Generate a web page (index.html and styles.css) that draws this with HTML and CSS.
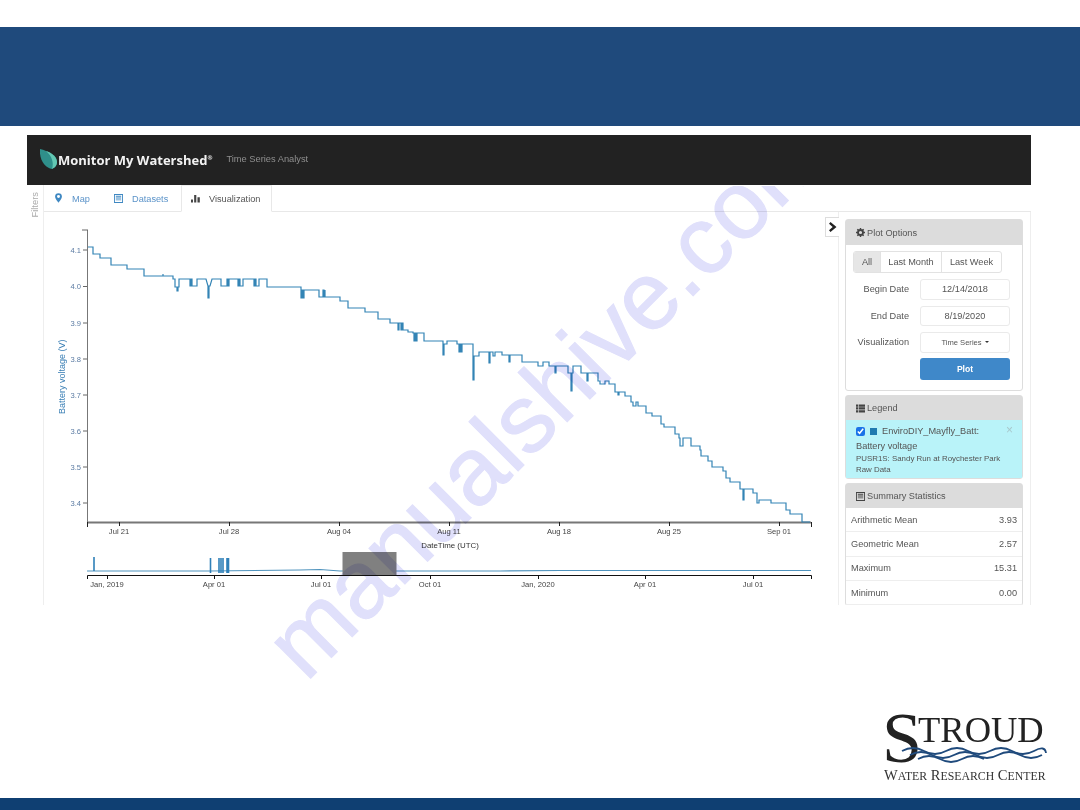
FILE: index.html
```html
<!DOCTYPE html>
<html lang="en">
<head>
    <meta charset="UTF-8">
    <title>Time Series Analyst</title>
    <link rel="stylesheet" href="styles.css">
</head>
<body>
    <div class="slide">
        <div class="title-band"></div>

        <div class="app">
            <header class="app-bar">
                <svg class="brand-leaf" viewBox="40 148 17 20" width="17" height="20">
                    <path fill="#2f8f8a" d="M40 148C48 150 57 154 57 161C57 165 54 167 52 168C46 167 39 160 40 148Z"/>
                    <path fill="#63c7b2" d="M46 150C52 152 57 156 57 161C57 165 54 167 52 168C54 162 52 155 46 150Z"/>
                </svg>
                <span class="brand-name">Monitor My Watershed<sup>®</sup></span>
                <span class="brand-sub">Time Series Analyst</span>
            </header>

            <div class="app-body">
                <div class="filters-rail"><span>Filters</span></div>

                <div class="workspace">
                    <nav class="tabs">
                        <a class="tab tab-map">
                            <svg class="icon icon-marker" viewBox="0 0 8 11"><path fill-rule="evenodd" d="M4 0a3.9 3.9 0 0 0-3.9 3.900C.1 6.600 4 11 4 11s3.900-4.400 3.900-7.100A3.900 3.900 0 0 0 4 0zm0 5.600a1.700 1.700 0 1 1 0-3.400 1.700 1.700 0 0 1 0 3.400z"/></svg>
                            Map
                        </a>
                        <a class="tab tab-datasets">
                            <svg class="icon" viewBox="0 0 10 10"><path fill-rule="evenodd" d="M0 0h10v10H0zm1 1v8h8V1zm1 1h6v1H2zm0 2h6v1H2zm0 2h6v1H2z"/></svg>
                            Datasets
                        </a>
                        <a class="tab tab-active">
                            <svg class="icon" viewBox="0 0 10 10"><path d="M0 6h2.200v3.500H0zM3.500 1h2.400v8.500H3.500zM7.200 3.500h2.600v6H7.200z"/></svg>
                            Visualization
                        </a>
                    </nav>

                    <div class="content">
                        <svg class="chart" viewBox="44 212 794 393" width="794" height="393">
                            <!-- main plot axes -->
                            <path class="axis-y" d="M87.5 230V522"/>
                            <path class="tick-y" d="M82 230h6M83 250h4M83 286.5h4M83 323h4M83 359h4M83 395h4M83 431h4M83 467h4M83 503h4"/>
                            <path class="axis-x" d="M87 522.5H811"/>
                            <path class="tick-x" d="M87.5 522v5M119.5 522v4M229.5 522v4M339.5 522v4M449.5 522v4M559.5 522v4M669.5 522v4M779.5 522v4M811.5 522v5"/>

                            <g class="labels-y">
                                <text x="81" y="253">4.1</text>
                                <text x="81" y="289">4.0</text>
                                <text x="81" y="326">3.9</text>
                                <text x="81" y="362">3.8</text>
                                <text x="81" y="398">3.7</text>
                                <text x="81" y="434">3.6</text>
                                <text x="81" y="470">3.5</text>
                                <text x="81" y="506">3.4</text>
                            </g>
                            <text class="label-y-title" transform="translate(65 414) rotate(-90)">Battery voltage (V)</text>

                            <g class="labels-x">
                                <text x="119" y="534">Jul 21</text>
                                <text x="229" y="534">Jul 28</text>
                                <text x="339" y="534">Aug 04</text>
                                <text x="449" y="534">Aug 11</text>
                                <text x="559" y="534">Aug 18</text>
                                <text x="669" y="534">Aug 25</text>
                                <text x="779" y="534">Sep 01</text>
                            </g>
                            <text class="label-x-title" x="450" y="548">DateTime (UTC)</text>

                            <!-- battery series, stepped -->
                            <path class="series" d="M88 247H93V254H100V258H111V265H127V269H144V276H163V274V276H173V279H175V287H177V291H178V287H179V279H190V286H191V279H192V286H197V279H206L208 286V298H209V286H210L212 279H221V286H227V279H228V286H229V279H238V286H239V279H240V286H243V279H254V286H255V279H256V286H259V279H267V287H301V298H302V290H303V298H304V290H319V297H323V290H324V297H325V290V297H340V301H348V308H365V312H378V319H390V323H398V330H399V323H401V330H402V323H403V330H408V332H413V333H414V341H415V333H416V341H417V333H424V341H443V355H444V344H447V341H457V344H459V352H460V344H461V352H462V344H473V380H474V356H479V352H489V363H490V352H493V356H495V352H502V355H509V362H510V355H522V362H538V366H543V362H549V366H555V373H556V366H568V373H571V391H572V373H573V366H581V373H587V381H588V373H598V381H600V384H605V381H609V384H615V392H618V395H619V392H625V396H631V402H633V406H636V402H638V406H646V413H652V416H661V424H664V427H675V434H679V438H680V446H683V438H691V446H700V450H701V456H708V461H712V467H723V471H726V478H730V482H740V489H743V500H744V489H753V493H757V503H759V500H771V503H786V510H790V514H802V522H810"/>

                            <!-- overview strip -->
                            <path class="overview-line" d="M87 571H210L300 570L320 569.5L340 571H500L560 570.5H811"/>
                            <path class="overview-spikes" d="M94 557V571M210.5 558V573M219 558V573M221 558V573M223 558V573M227 558V573M228.5 558V573"/>
                            <rect class="brush" x="342.5" y="552" width="54" height="23"/>
                            <path class="overview-axis" d="M87.5 579V575.5H811.5V579M107.5 575v4M214.5 575v4M321.5 575v4M430.5 575v4M538.5 575v4M645.5 575v4M753.5 575v4"/>
                            <g class="labels-x">
                                <text x="107" y="587">Jan, 2019</text>
                                <text x="214" y="587">Apr 01</text>
                                <text x="321" y="587">Jul 01</text>
                                <text x="430" y="587">Oct 01</text>
                                <text x="538" y="587">Jan, 2020</text>
                                <text x="645" y="587">Apr 01</text>
                                <text x="753" y="587">Jul 01</text>
                            </g>
                        </svg>

                        <button class="panel-toggle">
                            <svg viewBox="0 0 8 10" width="8" height="10"><path d="M1.5 0L7.5 5 1.5 10 0 8.300 3.700 5 0 1.700z"/></svg>
                        </button>

                        <aside class="side">
                            <section class="panel">
                                <h3 class="panel-heading">
                                    <svg class="icon" viewBox="0 0 10 10">
                                        <circle cx="5" cy="5" r="2.800" fill="none" stroke="#444" stroke-width="2"/>
                                        <path fill="none" stroke="#444" stroke-width="1.600" d="M5 0v2M5 8v2M0 5h2M8 5h2M1.500 1.500l1.400 1.400M7.100 7.100l1.400 1.400M1.500 8.500l1.400-1.400M7.100 2.900l1.400-1.400"/>
                                    </svg>
                                    Plot Options
                                </h3>
                                <div class="plot-form">
                                    <div class="btn-group">
                                        <span class="btn-seg btn-all">All</span>
                                        <span class="btn-seg btn-month">Last Month</span>
                                        <span class="btn-seg btn-week">Last Week</span>
                                    </div>
                                    <div class="form-row">
                                        <label>Begin Date</label>
                                        <div class="field">12/14/2018</div>
                                    </div>
                                    <div class="form-row">
                                        <label>End Date</label>
                                        <div class="field">8/19/2020</div>
                                    </div>
                                    <div class="form-row">
                                        <label>Visualization</label>
                                        <div class="field field-select">Time Series <i class="caret"></i></div>
                                    </div>
                                    <div class="form-row">
                                        <span></span>
                                        <div class="btn-plot">Plot</div>
                                    </div>
                                </div>
                            </section>

                            <section class="panel">
                                <h3 class="panel-heading heading-legend">
                                    <svg class="icon" viewBox="0 0 10 9"><path d="M0 0h2.500v2.500H0zM3.200 0H10v2.500H3.200zM0 3.200h2.500v2.500H0zM3.200 3.200H10v2.500H3.200zM0 6.400h2.500v2.500H0zM3.200 6.400H10v2.500H3.200z"/></svg>
                                    Legend
                                </h3>
                                <div class="legend-item">
                                    <div class="legend-title">
                                        <input type="checkbox" checked>
                                        <i class="swatch"></i>
                                        <span>EnviroDIY_Mayfly_Batt:</span>
                                        <span class="legend-close">×</span>
                                    </div>
                                    <div class="legend-line">Battery voltage</div>
                                    <div class="legend-small">PUSR1S: Sandy Run at Roychester Park</div>
                                    <div class="legend-small">Raw Data</div>
                                </div>
                            </section>

                            <section class="panel">
                                <h3 class="panel-heading heading-legend">
                                    <svg class="icon" viewBox="0 0 10 10"><path fill-rule="evenodd" d="M0 0h10v10H0zm1 1v8h8V1zm1 1h6v1H2zm0 2h6v1H2zm0 2h6v1H2z"/></svg>
                                    Summary Statistics
                                </h3>
                                <div class="stat-row"><span>Arithmetic Mean</span><span>3.93</span></div>
                                <div class="stat-row"><span>Geometric Mean</span><span>2.57</span></div>
                                <div class="stat-row"><span>Maximum</span><span>15.31</span></div>
                                <div class="stat-row"><span>Minimum</span><span>0.00</span></div>
                            </section>
                        </aside>
                    </div>
                </div>
            </div>
        </div>

        <div class="logo-row">
            <svg class="stroud-logo" viewBox="880 705 172 80" width="172" height="80">
                <text class="logo-s" x="882" y="762">S</text>
                <text class="logo-troud" x="918" y="742">TROUD</text>
                <g class="logo-waves">
                    <path d="M902 751q11-6 22 0t22 0 22 0 22 0 22 0 22 0 12 2"/>
                    <path d="M910 755q11-6 22 0t22 0 22 0 22 0 22 0 22 0"/>
                    <path d="M918 759q11-6 22 0t22 0 22 0"/>
                </g>
                <text class="logo-sub" x="884" y="780">W<tspan>ATER</tspan> R<tspan>ESEARCH</tspan> C<tspan>ENTER</tspan></text>
            </svg>
        </div>

        <div class="bottom-bar"></div>
    </div>

    <svg class="watermark" viewBox="0 0 1080 810" width="1080" height="810">
        <text transform="translate(306 683) rotate(-45)">manualshive.com</text>
    </svg>
</body>
</html>
```

FILE: styles.css
```css
* {
    margin: 0;
    padding: 0;
    box-sizing: border-box;
}

body {
    font-family: "Liberation Sans", Arial, sans-serif;
    font-size: 9.2px;
    color: #555;
    background: white;
}

.slide {
    position: relative;
    width: 1080px;
    height: 810px;
    padding-top: 27px;
    display: flex;
    flex-direction: column;
    overflow: hidden;
}

.title-band {
    height: 99px;
    background: #1f4a7c;
}

.app {
    width: 1004px;
    height: 470px;
    margin: 9px 0 0 27px;
    overflow: hidden;
    flex-shrink: 0;
}

.app-bar {
    height: 50px;
    background: #222;
    display: flex;
    align-items: center;
    padding-left: 13px;
}

.brand-leaf {
    margin-top: -3px;
}

.brand-name {
    margin-left: 1px;
    font-family: "Open Sans", sans-serif;
    font-size: 13px;
    font-weight: 700;
    color: #f2f2f2;
    white-space: nowrap;
}

.brand-name sup {
    font-size: 6px;
    line-height: 0;
}

.brand-sub {
    margin-left: 14px;
    font-size: 9.3px;
    color: #8f8f8f;
    margin-top: -3px;
}

.app-body {
    display: flex;
    height: 420px;
}

.filters-rail {
    width: 17px;
    flex-shrink: 0;
    border-right: 1px solid #eee;
    color: #aaa;
    font-size: 9.4px;
    padding-top: 7px;
}

.filters-rail span {
    display: block;
    writing-mode: vertical-rl;
    transform: rotate(180deg);
    margin-left: 2px;
}

.workspace {
    flex: 1;
    min-width: 0;
}

.tabs {
    height: 27px;
    display: flex;
    border-bottom: 1px solid #e8e8e8;
}

.tab {
    display: flex;
    align-items: center;
    color: #5b93c9;
    height: 27px;
}

.tab .icon {
    fill: #3f88c2;
}

.tab-map {
    width: 56px;
    padding-left: 11px;
    gap: 10px;
}

.tab-map .icon-marker {
    width: 7px;
    height: 10px;
    margin-top: -2px;
}

.tab-datasets {
    width: 81px;
    padding-left: 14px;
    gap: 9px;
}

.tab-active {
    width: 91px;
    padding-left: 9px;
    gap: 9px;
    color: #555;
    background: white;
    border: 1px solid #e8e8e8;
    border-top-color: #eee;
    border-bottom: 1px solid white;
}

.tab-active .icon {
    fill: #444;
}

.icon {
    width: 9px;
    height: 9px;
    fill: #444;
    flex-shrink: 0;
}

.content {
    position: relative;
    display: flex;
    height: 393px;
}

.chart {
    flex-shrink: 0;
    display: block;
}

.chart text {
    font-family: "Liberation Sans", Arial, sans-serif;
}

.axis-y {
    stroke: #777;
    stroke-width: 1;
    fill: none;
}

.tick-y {
    stroke: #666;
    fill: none;
}

.axis-x {
    stroke: #777;
    stroke-width: 2;
    fill: none;
}

.tick-x {
    stroke: #222;
    fill: none;
}

.labels-y text {
    font-size: 7.6px;
    fill: #5b7ba3;
    text-anchor: end;
}

.labels-x text {
    font-size: 7.6px;
    fill: #444;
    text-anchor: middle;
}

.label-y-title {
    font-size: 9px;
    fill: #3a7fb5;
}

.label-x-title {
    font-size: 7.9px;
    fill: #333;
    text-anchor: middle;
}

.series {
    fill: none;
    stroke: #3384b5;
    stroke-width: 1.2;
}

.overview-line {
    fill: none;
    stroke: #4f93bd;
    stroke-width: 1.2;
}

.overview-spikes {
    fill: none;
    stroke: #2f80b8;
    stroke-width: 1.6;
}

.brush {
    fill: #808080;
}

.overview-axis {
    fill: none;
    stroke: #111;
    stroke-width: 1;
}

.panel-toggle {
    position: absolute;
    left: 781px;
    top: 5px;
    width: 14px;
    height: 20px;
    background: white;
    border: 1px solid #ddd;
    border-right: none;
    display: flex;
    align-items: center;
    justify-content: center;
}

.panel-toggle path {
    fill: #222;
}

.side {
    width: 193px;
    flex-shrink: 0;
    border-left: 1px solid #eee;
    border-right: 1px solid #eee;
    padding: 7px 7px 0 6px;
    display: flex;
    flex-direction: column;
    gap: 4px;
}

.panel {
    width: 178px;
    border: 1px solid #ddd;
    border-radius: 3px;
    background: white;
    flex-shrink: 0;
}

.panel-heading {
    height: 25px;
    background: #dcdcdc;
    font-size: 9.2px;
    font-weight: normal;
    color: #555;
    display: flex;
    align-items: center;
    gap: 2px;
    padding-left: 10px;
}

.heading-legend {
    height: 24px;
}

.plot-form {
    padding: 6px 12px 11px 7px;
    display: flex;
    flex-direction: column;
    gap: 6px;
}

.btn-group {
    display: flex;
    width: 149px;
    height: 22px;
    border: 1px solid #e2e2e2;
    border-radius: 3px;
    overflow: hidden;
}

.btn-seg {
    display: flex;
    align-items: center;
    justify-content: center;
    border-right: 1px solid #e2e2e2;
    color: #555;
}

.btn-all {
    width: 27px;
    background: #e6e6e6;
}

.btn-month {
    width: 61px;
}

.btn-week {
    flex: 1;
    border-right: none;
}

.form-row {
    display: flex;
    align-items: center;
    height: 20.5px;
    gap: 11px;
}

.form-row label,
.form-row > span {
    width: 56px;
    text-align: right;
    white-space: nowrap;
    flex-shrink: 0;
}

.field {
    width: 91px;
    height: 100%;
    border: 1px solid #eaeaea;
    border-radius: 3px;
    display: flex;
    align-items: center;
    justify-content: center;
    color: #555;
}

.field-select {
    font-size: 7.6px;
    gap: 3px;
}

.caret {
    width: 0;
    height: 0;
    border-left: 2.5px solid transparent;
    border-right: 2.5px solid transparent;
    border-top: 2.5px solid #333;
}

.btn-plot {
    width: 91px;
    height: 22px;
    background: #3f88c9;
    border-radius: 3px;
    color: white;
    display: flex;
    align-items: center;
    justify-content: center;
    font-weight: bold;
    font-size: 8.6px;
}

.legend-item {
    position: relative;
    height: 58px;
    background: #b9f3f9;
    padding: 5px 10px;
    color: #555;
}

.legend-title {
    display: flex;
    align-items: center;
    height: 12px;
    margin-bottom: 2px;
}

.legend-title input {
    width: 9px;
    height: 9px;
    accent-color: #1a73e8;
    flex-shrink: 0;
}

.swatch {
    width: 7px;
    height: 7px;
    background: #1f7ab0;
    margin: 0 5px 0 5px;
    flex-shrink: 0;
}

.legend-close {
    position: absolute;
    right: 9px;
    top: 3px;
    font-size: 12px;
    color: #a8c8cc;
}

.legend-line {
    line-height: 14px;
}

.legend-small {
    font-size: 7.9px;
    line-height: 11px;
}

.stat-row {
    display: flex;
    justify-content: space-between;
    align-items: center;
    height: 24.3px;
    padding: 0 5px;
    border-bottom: 1px solid #eee;
}

.logo-row {
    display: flex;
    justify-content: flex-end;
    margin-top: auto;
    padding: 0 28px 13px 0;
}

.stroud-logo text {
    font-family: "Liberation Serif", serif;
    fill: #222;
}

.logo-s {
    font-size: 72px;
}

.logo-troud {
    font-size: 36.5px;
}

.logo-sub {
    font-size: 14.5px;
}

.stroud-logo .logo-sub {
    fill: #333;
}

.logo-sub tspan {
    font-size: 11.8px;
}

.logo-waves path {
    fill: none;
    stroke: #1f4a7c;
    stroke-width: 1.8;
}

.bottom-bar {
    height: 12px;
    background: #0f3f72;
    flex-shrink: 0;
}

/* watermark only shows on the light content area of the screenshot */
.watermark {
    position: absolute;
    left: 0;
    top: 0;
    pointer-events: none;
    mix-blend-mode: multiply;
    clip-path: inset(186px 242px 0 0);
}

.watermark text {
    font-family: "Liberation Sans", Arial, sans-serif;
    font-size: 96px;
    fill: #e0e0fb;
    stroke: #e0e0fb;
    stroke-width: 1px;
}
```
